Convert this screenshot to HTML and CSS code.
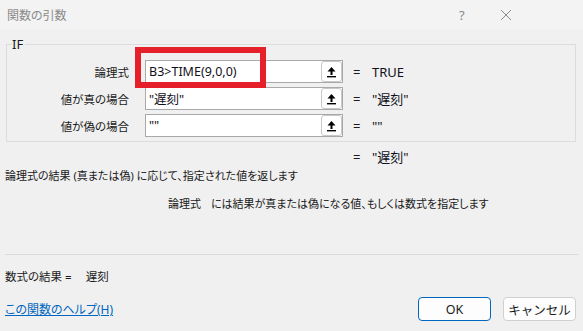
FILE: index.html
```html
<!DOCTYPE html>
<html lang="ja">
<head>
<meta charset="utf-8">
<title>関数の引数</title>
<link rel="stylesheet" href="styles.css">
</head>
<body>
<div class="window">
  <div class="titlebar">
    <span class="title">関数の引数</span>
    <span class="tb-help">?</span>
    <span class="tb-close"><svg width="12" height="12" viewBox="0 0 12 12"><path d="M1 1L11 11M11 1L1 11" stroke="#8a8a8a" stroke-width="1" fill="none"/></svg></span>
  </div>
  <div class="content">
    <div class="group">
      <span class="legend">IF</span>
      <div class="row">
        <span class="lbl">論理式</span>
        <div class="field"><span class="val">B3&gt;TIME(9,0,0)</span><span class="ref"><svg width="11" height="12" viewBox="0 0 11 12"><path d="M5.5 1L1.5 5.5H4.5V9H6.5V5.5H9.5Z" fill="#000"/><rect x="1" y="10" width="9" height="1.4" fill="#000"/></svg></span></div>
        <span class="eq">=</span>
        <span class="res">TRUE</span>
      </div>
      <div class="row">
        <span class="lbl">値が真の場合</span>
        <div class="field"><span class="val">"遅刻"</span><span class="ref"><svg width="11" height="12" viewBox="0 0 11 12"><path d="M5.5 1L1.5 5.5H4.5V9H6.5V5.5H9.5Z" fill="#000"/><rect x="1" y="10" width="9" height="1.4" fill="#000"/></svg></span></div>
        <span class="eq">=</span>
        <span class="res">"遅刻"</span>
      </div>
      <div class="row">
        <span class="lbl">値が偽の場合</span>
        <div class="field"><span class="val">""</span><span class="ref"><svg width="11" height="12" viewBox="0 0 11 12"><path d="M5.5 1L1.5 5.5H4.5V9H6.5V5.5H9.5Z" fill="#000"/><rect x="1" y="10" width="9" height="1.4" fill="#000"/></svg></span></div>
        <span class="eq">=</span>
        <span class="res">""</span>
      </div>
    </div>
    <div class="row total">
      <span class="lbl"></span>
      <span class="spacer"></span>
      <span class="eq">=</span>
      <span class="res">"遅刻"</span>
    </div>
    <p class="desc">論理式の結果 (真または偽) に応じて、指定された値を返します</p>
    <p class="desc2"><span class="argname">論理式</span><span>には結果が真または偽になる値、もしくは数式を指定します</span></p>
    <div class="sep"></div>
    <p class="formula">数式の結果 =<span class="formula-val">遅刻</span></p>
    <div class="footer">
      <a class="help-link" href="#">この関数のヘルプ(H)</a>
      <div class="buttons">
        <button class="btn btn-ok">OK</button>
        <button class="btn">キャンセル</button>
      </div>
    </div>
  </div>
  <div class="highlight"></div>
</div>
</body>
</html>
```

FILE: styles.css
```css
html, body {
  margin: 0;
  padding: 0;
  background: #f0f0f0;
}
body {
  font-family: "Noto Sans", "Noto Sans CJK JP", sans-serif;
  font-size: 11.5px;
  color: #1a1a1a;
  font-feature-settings: "palt";
}
.window {
  position: relative;
  width: 583px;
  height: 331px;
  overflow: hidden;
}
.titlebar {
  height: 29px;
  background: #f3f3f3;
  display: flex;
  align-items: center;
  padding-left: 7px;
  box-sizing: border-box;
}
.title {
  color: #8a8a8a;
  font-size: 12px;
  flex: 1;
}
.tb-help {
  color: #8a8a8a;
  font-size: 13px;
  width: 10px;
  margin-right: 31px;
}
.tb-close {
  display: flex;
  margin-right: 71px;
  width: 12px;
}
.content {
  padding: 0 5px;
}
.group {
  position: relative;
  margin: 15px 2px 0 1px;
  height: 98px;
  border: 1px solid #dcdcdc;
  box-sizing: border-box;
  padding-top: 15px;
}
.legend {
  position: absolute;
  left: 5px;
  top: -9px;
  background: #f0f0f0;
  padding: 0 2px 0 0;
  line-height: 16px;
  font-size: 13px;
}
.row {
  display: grid;
  grid-template-columns: 130px 206px 29px 1fr;
  align-items: center;
  height: 23px;
  margin-bottom: 4px;
}
.lbl {
  text-align: right;
  padding-right: 8px;
  white-space: nowrap;
  font-size: 11.5px;
}
.row .lbl {
  width: 130px;
  box-sizing: border-box;
}
.field {
  grid-column: 2;
  height: 23px;
  margin-left: 8px;
  width: 198px;
  box-sizing: border-box;
  border: 1px solid #a9a9a9;
  background: #fff;
  display: flex;
  align-items: center;
  justify-content: space-between;
}
.val {
  padding-left: 3px;
  font-size: 12.5px;
  color: #101020;
}
.ref {
  width: 21px;
  height: 21px;
  box-sizing: border-box;
  border: 1px solid #c8c8c8;
  border-radius: 3px;
  background: #fff;
  display: flex;
  align-items: center;
  justify-content: center;
}
.eq {
  padding-left: 10px;
  font-size: 13px;
}
.res {
  font-size: 13px;
  color: #101020;
  white-space: nowrap;
}
.total {
  margin: 5px 0 0 2px;
  height: 16px;
}
.desc {
  margin: 5px 0 0;
  line-height: 16px;
  font-size: 11px;
  white-space: nowrap;
}
.desc2 {
  margin: 12px 0 0;
  line-height: 16px;
  font-size: 11px;
  padding-left: 163px;
  white-space: nowrap;
}
.argname {
  margin-right: 10px;
}
.sep {
  margin-top: 42px;
  height: 1px;
  background: #d9d9d9;
}
.formula {
  margin: 14px 0 0;
  line-height: 16px;
  white-space: nowrap;
}
.formula-val {
  margin-left: 14px;
}
.footer {
  margin-top: 12px;
  display: flex;
  align-items: center;
  justify-content: space-between;
}
.help-link {
  color: #0067c0;
  text-decoration: underline;
  font-size: 12px;
}
.buttons {
  display: flex;
  gap: 12px;
  margin-right: 2px;
}
.btn {
  width: 73px;
  height: 24px;
  box-sizing: border-box;
  background: #fdfdfd;
  border: 1px solid #d0d0d0;
  border-radius: 4px;
  font-family: inherit;
  font-size: 12.5px;
  color: #1a1a1a;
  padding: 0;
}
.btn-ok {
  border-color: #0067c0;
}
.highlight {
  position: absolute;
  left: 135px;
  top: 47px;
  width: 131px;
  height: 41px;
  box-sizing: border-box;
  border: 6px solid #e5202a;
}
```
